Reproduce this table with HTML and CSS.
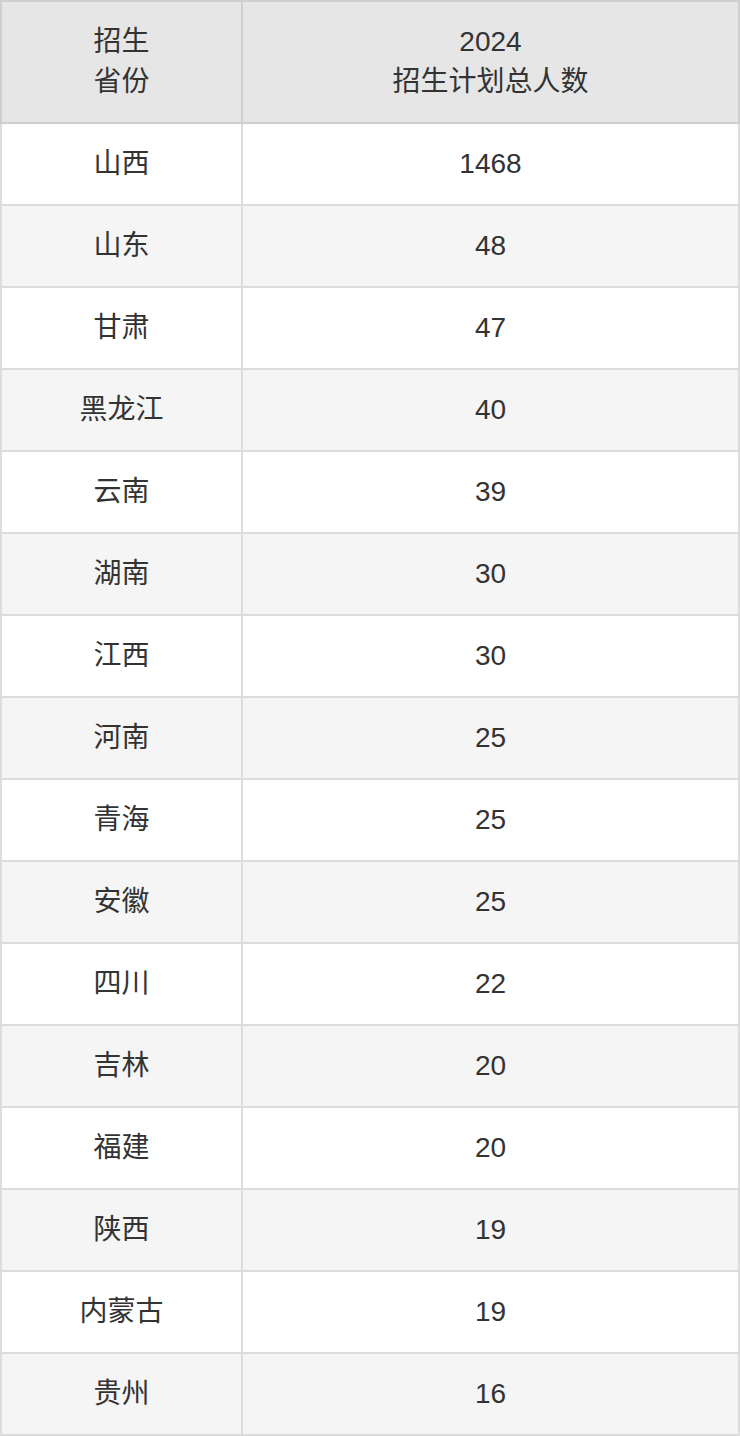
FILE: index.html
```html
<!DOCTYPE html>
<html lang="zh-CN">
<head>
<meta charset="utf-8">
<title>招生计划</title>
<link rel="stylesheet" href="styles.css">
</head>
<body>
<table class="plan">
  <colgroup><col class="c-prov"><col class="c-num"></colgroup>
  <thead>
    <tr><th>招生<br>省份</th><th>2024<br>招生计划总人数</th></tr>
  </thead>
  <tbody>
    <tr><td>山西</td><td>1468</td></tr>
    <tr><td>山东</td><td>48</td></tr>
    <tr><td>甘肃</td><td>47</td></tr>
    <tr><td>黑龙江</td><td>40</td></tr>
    <tr><td>云南</td><td>39</td></tr>
    <tr><td>湖南</td><td>30</td></tr>
    <tr><td>江西</td><td>30</td></tr>
    <tr><td>河南</td><td>25</td></tr>
    <tr><td>青海</td><td>25</td></tr>
    <tr><td>安徽</td><td>25</td></tr>
    <tr><td>四川</td><td>22</td></tr>
    <tr><td>吉林</td><td>20</td></tr>
    <tr><td>福建</td><td>20</td></tr>
    <tr><td>陕西</td><td>19</td></tr>
    <tr><td>内蒙古</td><td>19</td></tr>
    <tr><td>贵州</td><td>16</td></tr>
  </tbody>
</table>
</body>
</html>
```
FILE: styles.css
```css
html, body {
  margin: 0;
  padding: 0;
  background: #fff;
}
.plan {
  width: 740px;
  border-collapse: collapse;
  table-layout: fixed;
  font-family: "Liberation Sans", "Noto Sans CJK SC", sans-serif;
  font-size: 28px;
  color: #333;
}
.c-prov { width: 241px; }
.plan th, .plan td {
  border: 2px solid #dcdcdc;
  text-align: center;
  vertical-align: middle;
  line-height: 40px;
  padding: 20px 0;
  font-weight: normal;
}
.plan th {
  background: #e6e6e6;
  border-color: #cfcfcf;
}
.plan tbody tr:nth-child(odd) td { background: #fff; }
.plan tbody tr:nth-child(even) td { background: #f5f5f5; }
```
